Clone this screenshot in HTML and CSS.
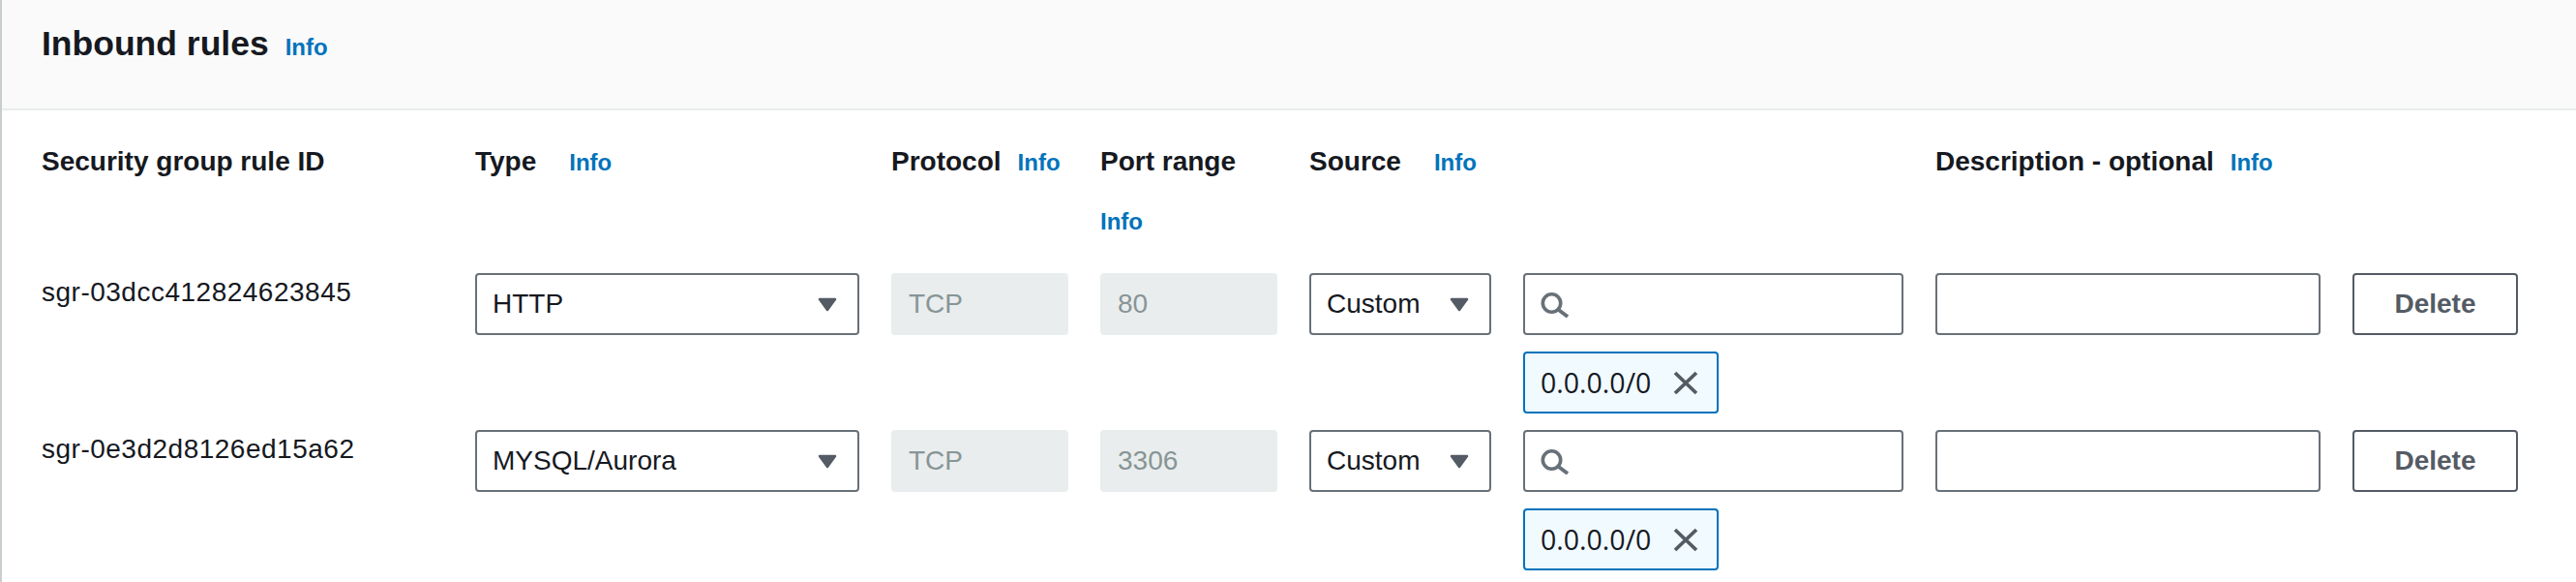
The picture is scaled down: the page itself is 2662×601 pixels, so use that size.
FILE: index.html
```html
<!DOCTYPE html>
<html lang="en">
<head>
<meta charset="utf-8">
<title>Inbound rules</title>
<link rel="stylesheet" href="styles.css">
</head>
<body>
<div class="panel">
  <div class="panel-header">
    <h2 class="panel-title"><span>Inbound rules</span><a class="info" href="#">Info</a></h2>
  </div>
  <div class="panel-body">
    <div class="rule-grid labels">
      <div class="label-cell"><span class="label">Security group rule ID</span></div>
      <div class="label-cell wide"><span class="label">Type</span><a class="info" href="#">Info</a></div>
      <div class="label-cell"><span class="label">Protocol</span><a class="info" href="#">Info</a></div>
      <div class="label-cell"><span class="label">Port range</span><a class="info" href="#">Info</a></div>
      <div class="label-cell wide"><span class="label">Source</span><a class="info" href="#">Info</a></div>
      <div class="label-cell"></div>
      <div class="label-cell"><span class="label">Description - optional</span><a class="info" href="#">Info</a></div>
      <div class="label-cell"></div>
    </div>

    <div class="rows">
      <div class="rule-grid rule-row">
        <div class="rule-id">sgr-03dcc412824623845</div>
        <div class="control select"><span class="select-text">HTTP</span><svg class="caret" width="20" height="15" viewBox="0 0 20 15"><path d="M2 2 H18 L10 13 Z" fill="#545b64" stroke="#545b64" stroke-width="2.5" stroke-linejoin="round"/></svg></div>
        <div class="control disabled">TCP</div>
        <div class="control disabled">80</div>
        <div class="control select"><span class="select-text">Custom</span><svg class="caret" width="20" height="15" viewBox="0 0 20 15"><path d="M2 2 H18 L10 13 Z" fill="#545b64" stroke="#545b64" stroke-width="2.5" stroke-linejoin="round"/></svg></div>
        <div class="source-cell">
          <div class="control search"><svg class="search-icon" width="30" height="26" viewBox="0 0 30 26"><circle cx="11.5" cy="11" r="9.2" fill="none" stroke="#687078" stroke-width="3.6"/><path d="M18 17.5 L28 25" stroke="#687078" stroke-width="3.8"/></svg></div>
          <div class="token"><span class="token-text">0.0.0.0/0</span><svg class="token-x" width="28" height="25" viewBox="0 0 28 25"><path d="M3 2 L25 23 M25 2 L3 23" stroke="#545b64" stroke-width="3.8"/></svg></div>
        </div>
        <div class="control text-input"></div>
        <button class="btn">Delete</button>
      </div>

      <div class="rule-grid rule-row">
        <div class="rule-id">sgr-0e3d2d8126ed15a62</div>
        <div class="control select"><span class="select-text">MYSQL/Aurora</span><svg class="caret" width="20" height="15" viewBox="0 0 20 15"><path d="M2 2 H18 L10 13 Z" fill="#545b64" stroke="#545b64" stroke-width="2.5" stroke-linejoin="round"/></svg></div>
        <div class="control disabled">TCP</div>
        <div class="control disabled">3306</div>
        <div class="control select"><span class="select-text">Custom</span><svg class="caret" width="20" height="15" viewBox="0 0 20 15"><path d="M2 2 H18 L10 13 Z" fill="#545b64" stroke="#545b64" stroke-width="2.5" stroke-linejoin="round"/></svg></div>
        <div class="source-cell">
          <div class="control search"><svg class="search-icon" width="30" height="26" viewBox="0 0 30 26"><circle cx="11.5" cy="11" r="9.2" fill="none" stroke="#687078" stroke-width="3.6"/><path d="M18 17.5 L28 25" stroke="#687078" stroke-width="3.8"/></svg></div>
          <div class="token"><span class="token-text">0.0.0.0/0</span><svg class="token-x" width="28" height="25" viewBox="0 0 28 25"><path d="M3 2 L25 23 M25 2 L3 23" stroke="#545b64" stroke-width="3.8"/></svg></div>
        </div>
        <div class="control text-input"></div>
        <button class="btn">Delete</button>
      </div>
    </div>
  </div>
</div>
</body>
</html>
```

FILE: styles.css
```css
* {
  box-sizing: border-box;
}

html, body {
  margin: 0;
  padding: 0;
  background: #ffffff;
}

body {
  font-family: "Liberation Sans", Arial, sans-serif;
  font-size: 28px;
  color: #16191f;
}

.panel {
  border-left: 2px solid #c8ced0;
  min-height: 601px;
}

.panel-header {
  height: 114px;
  padding: 23px 41px 0 41px;
  background: #fafafa;
  border-bottom: 2px solid #eaeded;
}

.panel-title {
  margin: 0;
  display: flex;
  align-items: baseline;
  column-gap: 17px;
  font-size: 35.5px;
  line-height: 44px;
  font-weight: 700;
}

.info {
  color: #0073bb;
  font-size: 24px;
  line-height: 32px;
  font-weight: 700;
  text-decoration: none;
}

.panel-body {
  padding: 31px 41px 0 41px;
}

.rule-grid {
  display: grid;
  grid-template-columns: 415px 397px 183px 183px 188px 393px 398px 171px;
  column-gap: 33px;
  align-items: start;
}

.labels {
  margin-bottom: 37px;
}

.label-cell {
  display: flex;
  flex-wrap: wrap;
  align-items: baseline;
  column-gap: 17px;
  row-gap: 24px;
}

.label-cell.wide {
  column-gap: 34px;
}

.label {
  font-weight: 700;
  line-height: 44px;
}

.rows {
  display: flex;
  flex-direction: column;
  row-gap: 17px;
}

.rule-id {
  line-height: 40px;
  letter-spacing: 0.5px;
}

.control {
  height: 64px;
  border: 2px solid #687078;
  border-radius: 4px;
  background: #ffffff;
  display: flex;
  align-items: center;
  padding: 0 16px;
  line-height: 44px;
}

.select {
  justify-content: space-between;
  padding-right: 21px;
}

.caret {
  display: block;
  flex: none;
}

.disabled {
  background: #eaeded;
  border-color: #eaeded;
  color: #879596;
}

.source-cell {
  display: flex;
  flex-direction: column;
  align-items: flex-start;
  row-gap: 17px;
}

.search {
  width: 100%;
}

.search-icon {
  display: block;
  margin-top: 1px;
}

.text-input {
  width: 100%;
}

.token {
  height: 64px;
  display: inline-flex;
  align-items: center;
  column-gap: 22px;
  padding: 0 18px 0 16px;
  border: 2px solid #0073bb;
  border-radius: 4px;
  background: #f1faff;
}

.token-text {
  font-family: "Open Sans", "Liberation Sans", sans-serif;
  font-size: 28.5px;
  line-height: 44px;
  color: #16191f;
}

.token-x {
  display: block;
}

.btn {
  height: 64px;
  margin: 0;
  padding: 0;
  border: 2px solid #545b64;
  border-radius: 4px;
  background: #ffffff;
  color: #545b64;
  font-family: "Liberation Sans", Arial, sans-serif;
  font-size: 28px;
  font-weight: 700;
  line-height: 44px;
}
```
